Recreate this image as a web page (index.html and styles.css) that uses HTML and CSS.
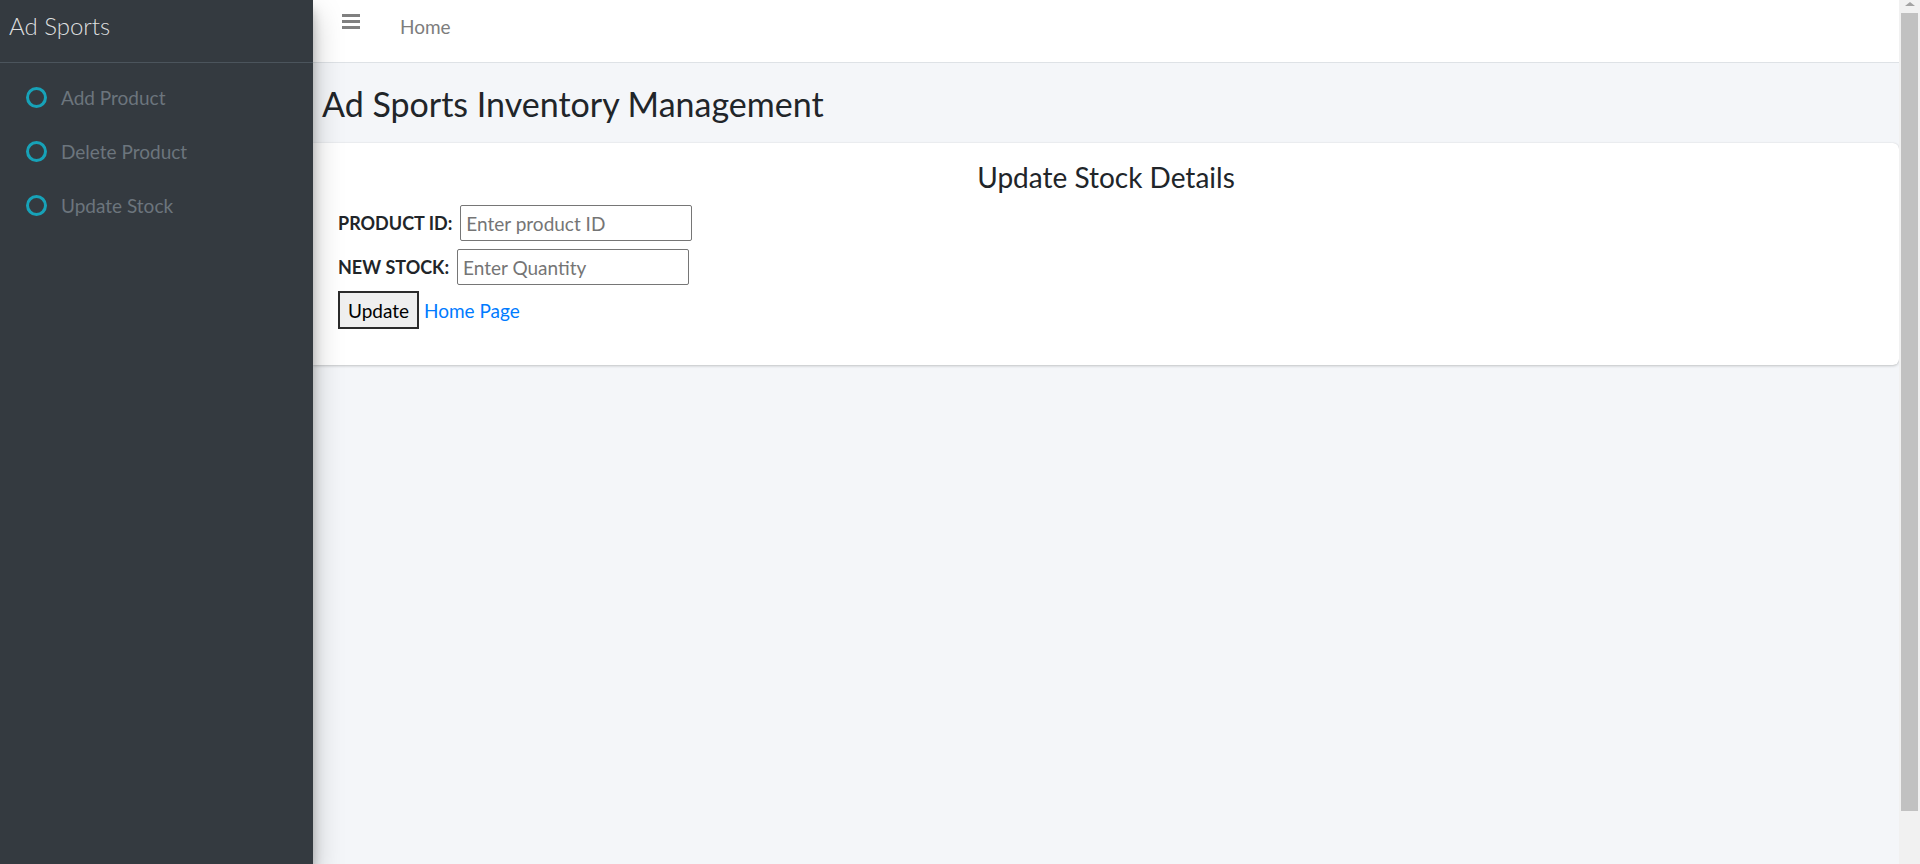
FILE: index.html
```html
<!DOCTYPE html>
<html lang="en">
<head>
<meta charset="utf-8">
<title>Ad Sports</title>
<link rel="stylesheet" href="styles.css">
</head>
<body>
<div class="app">
  <aside class="sidebar">
    <div class="brand">Ad Sports</div>
    <nav class="nav">
      <a class="nav-link" href="#"><span class="circle"></span><span>Add Product</span></a>
      <a class="nav-link" href="#"><span class="circle"></span><span>Delete Product</span></a>
      <a class="nav-link" href="#"><span class="circle"></span><span>Update Stock</span></a>
    </nav>
  </aside>
  <div class="main">
    <header class="navbar">
      <span class="burger"><i></i><i></i><i></i></span>
      <a class="home" href="#">Home</a>
    </header>
    <section class="content">
      <div class="content-header"><h1>Ad Sports Inventory Management</h1></div>
      <div class="card">
        <h3 class="card-title">Update Stock Details</h3>
        <form class="form">
          <div class="row"><label>PRODUCT ID:</label><input type="text" placeholder="Enter product ID"></div>
          <div class="row"><label>NEW STOCK:</label><input type="text" placeholder="Enter Quantity"></div>
          <div class="row actions"><button type="button">Update</button><a class="link" href="#">Home Page</a></div>
        </form>
      </div>
    </section>
  </div>
  <div class="scrollbar"><span class="arrow"></span><div class="thumb"></div></div>
</div>
</body>
</html>
```
FILE: styles.css
```css
* { box-sizing: border-box; }
html, body { margin: 0; height: 100%; }
body {
  font-family: Lato, "Open Sans", sans-serif;
  font-size: 20px;
  color: #212529;
  overflow: hidden;
}
.app { display: flex; height: 864px; }
.sidebar {
  width: 313px;
  flex: none;
  background: #343a40;
  position: relative;
  z-index: 2;
  box-shadow: 0 14px 28px rgba(0,0,0,.25), 0 10px 10px rgba(0,0,0,.22);
}
.brand {
  height: 63px;
  border-bottom: 1px solid #4b545c;
  padding: 11px 0 0 9px;
  font-size: 24px;
  font-weight: 300;
  color: rgba(255,255,255,.85);
}
.nav { padding-top: 9px; display: flex; flex-direction: column; }
.nav-link {
  height: 50px;
  margin-bottom: 4px;
  display: flex;
  align-items: center;
  padding-left: 26px;
  gap: 14px;
  color: #6c757d;
  text-decoration: none;
  font-size: 19px;
}
.circle {
  width: 21px; height: 21px;
  border: 3px solid #17a2b8;
  border-radius: 50%;
  flex: none;
}
.main { flex: 1; display: flex; flex-direction: column; min-width: 0; }
.navbar {
  height: 63px;
  background: #fff;
  border-bottom: 1px solid #dee2e6;
  display: flex;
  align-items: flex-start;
  padding-left: 29px;
}
.burger { display: flex; flex-direction: column; gap: 3px; margin-top: 14px; width: 18px; }
.burger i { display: block; height: 3px; background: #808080; }
.home { margin-left: 40px; margin-top: 15px; color: #7d7d7d; text-decoration: none; font-size: 19px; }
.content { flex: 1; background: #f4f6f9; }
.content-header { padding: 19px 9px 18px; }
.content-header h1 { margin: 0; font-size: 34px; font-weight: 400; line-height: 43px; }
.card {
  background: #fff;
  border-radius: 0 6px 6px 0;
  box-shadow: 0 0 1px rgba(0,0,0,.125), 0 1px 3px rgba(0,0,0,.2);
  padding: 16px 25px 35px;
  height: 222px;
}
.card-title { margin: 0 0 10px; text-align: center; font-size: 28px; font-weight: 400; line-height: 36px; }
.form { display: flex; flex-direction: column; }
.row { display: flex; align-items: center; gap: 8px; margin-bottom: 8px; }
.row label { font-weight: 700; font-size: 18px; }
.row input {
  width: 232px; height: 36px;
  border: 1px solid #767676; border-radius: 2px;
  padding: 0 5px;
  font-family: inherit; font-size: 19px; color: #212529;
}
.row input::placeholder { color: #757575; }
.actions { gap: 5px; margin-top: -2px; }
.actions button {
  width: 81px; height: 38px;
  border: 2px solid #2b2b2b;
  background: #efefef;
  font-family: inherit; font-size: 19px; color: #000;
  padding: 0;
}
.link { color: #007bff; text-decoration: none; font-size: 19px; }
.scrollbar { width: 21px; flex: none; background: #f1f1f1; display: flex; flex-direction: column; align-items: center; }
.arrow { margin-top: 2px; width: 0; height: 0; border-left: 5px solid transparent; border-right: 5px solid transparent; border-bottom: 4px solid #a3a3a3; }
.thumb { margin-top: 7px; width: 17px; height: 798px; background: #c1c1c1; }
```
